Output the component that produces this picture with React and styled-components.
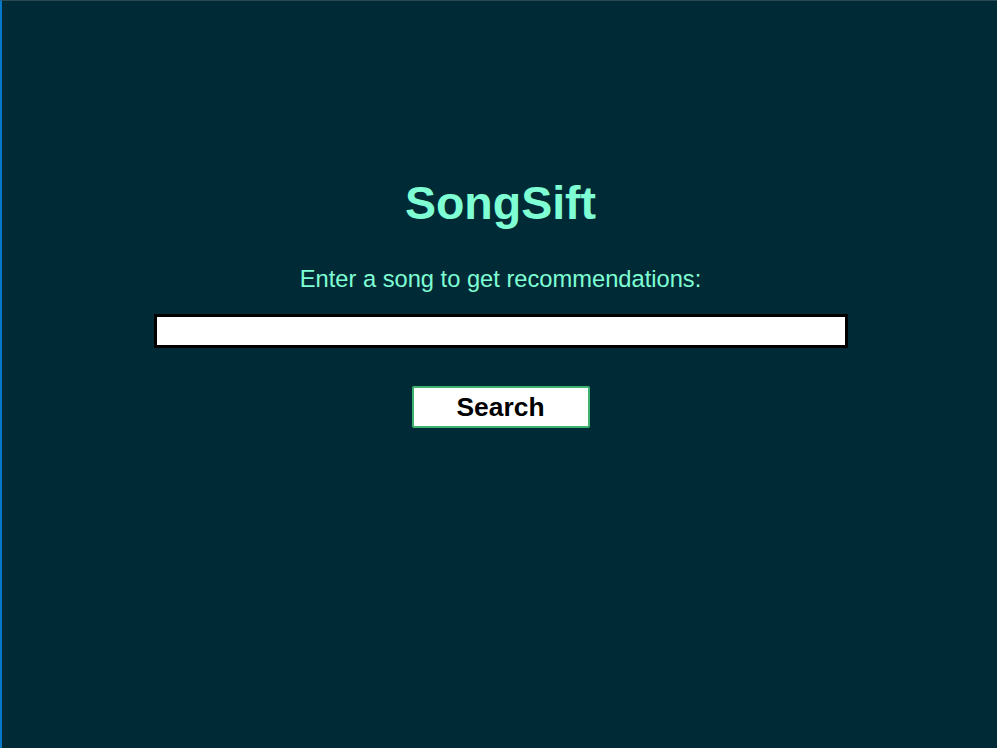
import React, { useState } from "react";
import styled, { createGlobalStyle } from "styled-components";

const GlobalStyle = createGlobalStyle`
    html, body {
        margin: 0;
        padding: 0;
        background: #002b36;
    }
`;

const Page = styled.div`
    box-sizing: border-box;
    height: 748px;
    background-color: #002b36;
    border-left: 2px solid #0a78c8;
    border-top: 1px solid #2a4a52;
    font-family: "Liberation Sans", Arial, sans-serif;
    display: flex;
    flex-direction: column;
    align-items: center;
    padding: 175px 0 0 2px;
`;

const Title = styled.h1`
    margin: 0;
    color: #7fffd4;
    font-size: 46.5px;
    font-weight: bold;
`;

const Prompt = styled.label`
    margin-top: 36px;
    color: #7fffd4;
    font-size: 23.7px;
`;

const SongInput = styled.input`
    box-sizing: border-box;
    margin-top: 21px;
    width: 694px;
    height: 34px;
    border: 3px solid #000;
    background: #fff;
    outline: none;
    font-size: 18px;
`;

const SearchButton = styled.button`
    box-sizing: border-box;
    margin-top: 38px;
    width: 178px;
    height: 42px;
    background: #fff;
    border: 2px solid #3cb371;
    border-radius: 2px;
    font-family: "Liberation Sans", Arial, sans-serif;
    font-size: 26.4px;
    font-weight: bold;
    color: #000;
`;

export default function App() {
    const [song, setSong] = useState("");

    return (
        <>
            <GlobalStyle />
            <Page>
                <Title>SongSift</Title>
                <Prompt htmlFor="song">Enter a song to get recommendations:</Prompt>
                <SongInput
                    id="song"
                    value={song}
                    onChange={(e) => setSong(e.target.value)}
                />
                <SearchButton>Search</SearchButton>
            </Page>
        </>
    );
}
